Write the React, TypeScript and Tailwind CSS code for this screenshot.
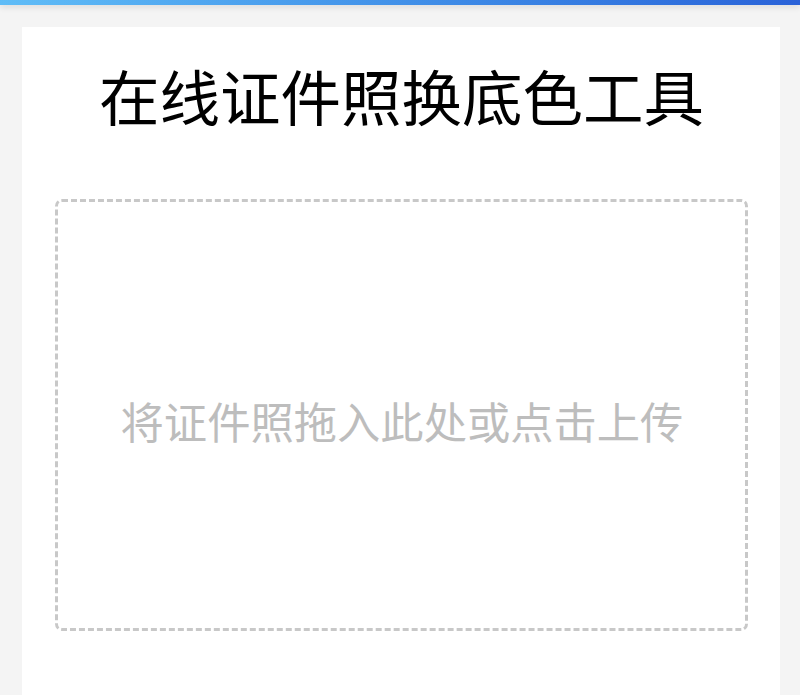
export default function App() {
  return (
    <div
      className="min-h-[695px] bg-[#f4f4f4] flex flex-col"
      style={{ fontFamily: '"Noto Sans CJK SC", "Noto Sans", sans-serif' }}
    >
      {/* top progress bar */}
      <div className="h-[5px] bg-gradient-to-r from-[#60bdf7] to-[#2a62d8] shadow-[0_2px_6px_rgba(0,0,0,0.12)]" />

      <main className="flex-1 flex flex-col pl-[22px] pr-[20px] pt-[22px]">
        <div className="flex-1 bg-white pl-[33px] pr-[32px] pt-[37px] pb-[60px]">
          <h1 className="text-center text-[60.5px] leading-[61px] font-normal text-black">
            在线证件照换底色工具
          </h1>

          <div className="mt-[74px] h-[432px] rounded-[7px] border-[3px] border-dashed border-[#c8c8c8] flex items-center justify-center cursor-pointer">
            <p className="text-[43.3px] leading-[44px] text-[#bdbdbd] mt-[10px] ml-[1px]">
              将证件照拖入此处或点击上传
            </p>
          </div>
        </div>
      </main>
    </div>
  )
}
